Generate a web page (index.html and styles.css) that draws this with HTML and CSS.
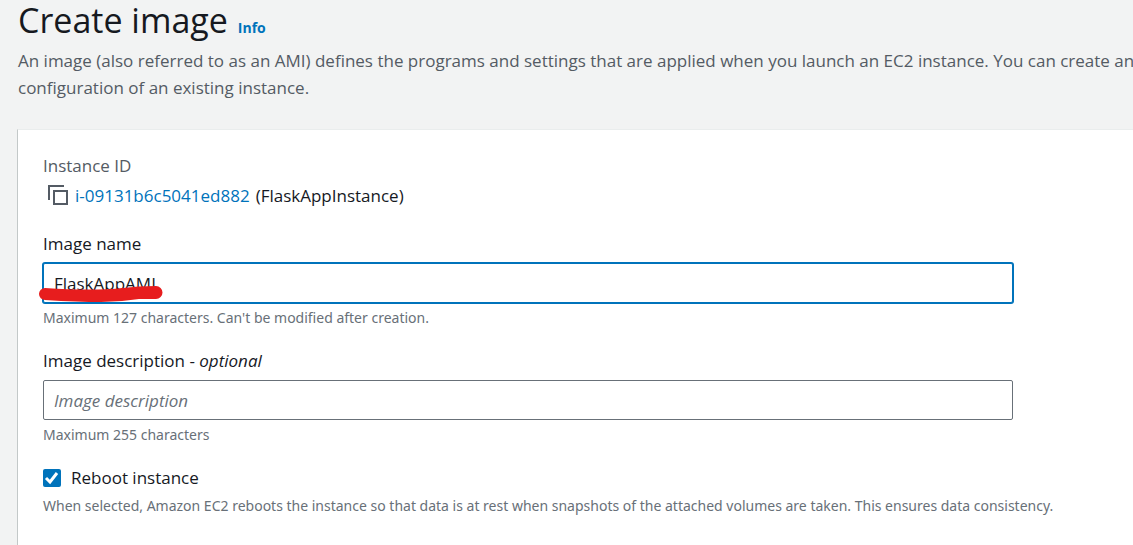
FILE: index.html
```html
<!DOCTYPE html>
<html lang="en">
<head>
<meta charset="utf-8">
<title>Create image</title>
<link rel="stylesheet" href="styles.css">
</head>
<body>
<header class="page-header">
  <div class="heading"><h1>Create image</h1><a class="info" href="#">Info</a></div>
  <p class="intro">An image (also referred to as an AMI) defines the programs and settings that are applied when you launch an EC2 instance. You can create an<br>configuration of an existing instance.</p>
</header>
<main class="panel">
  <section class="instance">
    <div class="caption">Instance ID</div>
    <div class="instance-row">
      <button class="copy" type="button" aria-label="Copy instance ID"><svg viewBox="0 0 21 21" width="21" height="21"><path d="M1 15V1h15M6 6h13v13H6z"/></svg></button>
      <a href="#">i-09131b6c5041ed882</a>
      <span>(FlaskAppInstance)</span>
    </div>
  </section>
  <div class="field">
    <label for="name">Image name</label>
    <div class="control">
      <input class="text focused" id="name" type="text" value="FlaskAppAMI">
      <svg class="marker" viewBox="0 0 126 20" width="126" height="20" aria-hidden="true"><path d="M7 5Q55 8 85 5Q100 3 118 3A6 6 0 0 1 118 16L101 16Q82 19 63 19Q40 19 7 17A6 6 0 0 1 7 5z"/></svg>
    </div>
    <p class="hint">Maximum 127 characters. Can't be modified after creation.</p>
  </div>
  <div class="field">
    <label for="description">Image description - <em>optional</em></label>
    <div class="control"><input class="text" id="description" type="text" placeholder="Image description"></div>
    <p class="hint">Maximum 255 characters</p>
  </div>
  <div class="field">
    <div class="check">
      <span class="box"><input id="reboot" type="checkbox" checked><svg viewBox="0 0 18 18" width="18" height="18" aria-hidden="true"><path d="M3 9l4 4 7-9"/></svg></span>
      <label for="reboot">Reboot instance</label>
    </div>
    <p class="hint">When selected, Amazon EC2 reboots the instance so that data is at rest when snapshots of the attached volumes are taken. This ensures data consistency.</p>
  </div>
</main>
</body>
</html>
```
FILE: styles.css
```css
* { box-sizing: border-box; }
body {
  display: flex;
  flex-direction: column;
  min-height: 100vh;
  margin: 0;
  overflow-x: hidden;
  background: #f2f3f3;
  color: #16191f;
  font: 17px/27px "Open Sans", "Noto Sans", sans-serif;
}
h1, p { margin: 0; }
a { color: #0073bb; text-decoration: none; }
.page-header { padding: 0 0 28px 18px; }
.heading { display: flex; align-items: baseline; gap: 10px; height: 47px; }
h1 { font-size: 34px; line-height: 40px; font-weight: 400; }
.info { font-size: 14px; font-weight: 700; }
.intro { color: #545b64; white-space: nowrap; }
.panel {
  display: flex;
  flex: 1;
  flex-direction: column;
  gap: 18px;
  margin-left: 17px;
  padding: 22px 24px 16px 25px;
  border-left: 1px solid #c3c8c8;
  border-top: 1px solid #eaeded;
  background: #fff;
}
.caption { color: #545b64; }
.instance-row { display: flex; align-items: center; gap: 6px; height: 33px; }
.copy { display: flex; margin: 0 0 0 5px; padding: 0; border: 0; background: none; }
.copy svg { fill: none; stroke: #545b64; stroke-width: 2; }
.field label { display: block; }
.control { position: relative; width: 91%; margin-top: 6px; }
.text {
  display: block;
  width: 100%;
  height: 40px;
  padding: 0 10px;
  border: 1px solid #687078;
  border-radius: 2px;
  background: #fff;
  color: #16191f;
  font: inherit;
}
.text::placeholder { color: #687078; font-style: italic; opacity: 1; }
.focused { border-color: #0073bb; box-shadow: 0 0 0 1px #0073bb; outline: 0; }
.marker { position: absolute; left: -5px; top: 20px; fill: #e71d1e; }
.hint { margin-top: 4px; color: #687078; font-family: "Noto Sans", "Open Sans", sans-serif; font-size: 14px; line-height: 22px; }
.check { display: flex; align-items: center; gap: 10px; }
.box { display: grid; }
.box input, .box svg { grid-area: 1 / 1; }
.box input { appearance: none; width: 18px; height: 18px; margin: 0; border-radius: 2px; background: #0073bb; }
.box svg { fill: none; stroke: #fff; stroke-width: 3; pointer-events: none; }
```
